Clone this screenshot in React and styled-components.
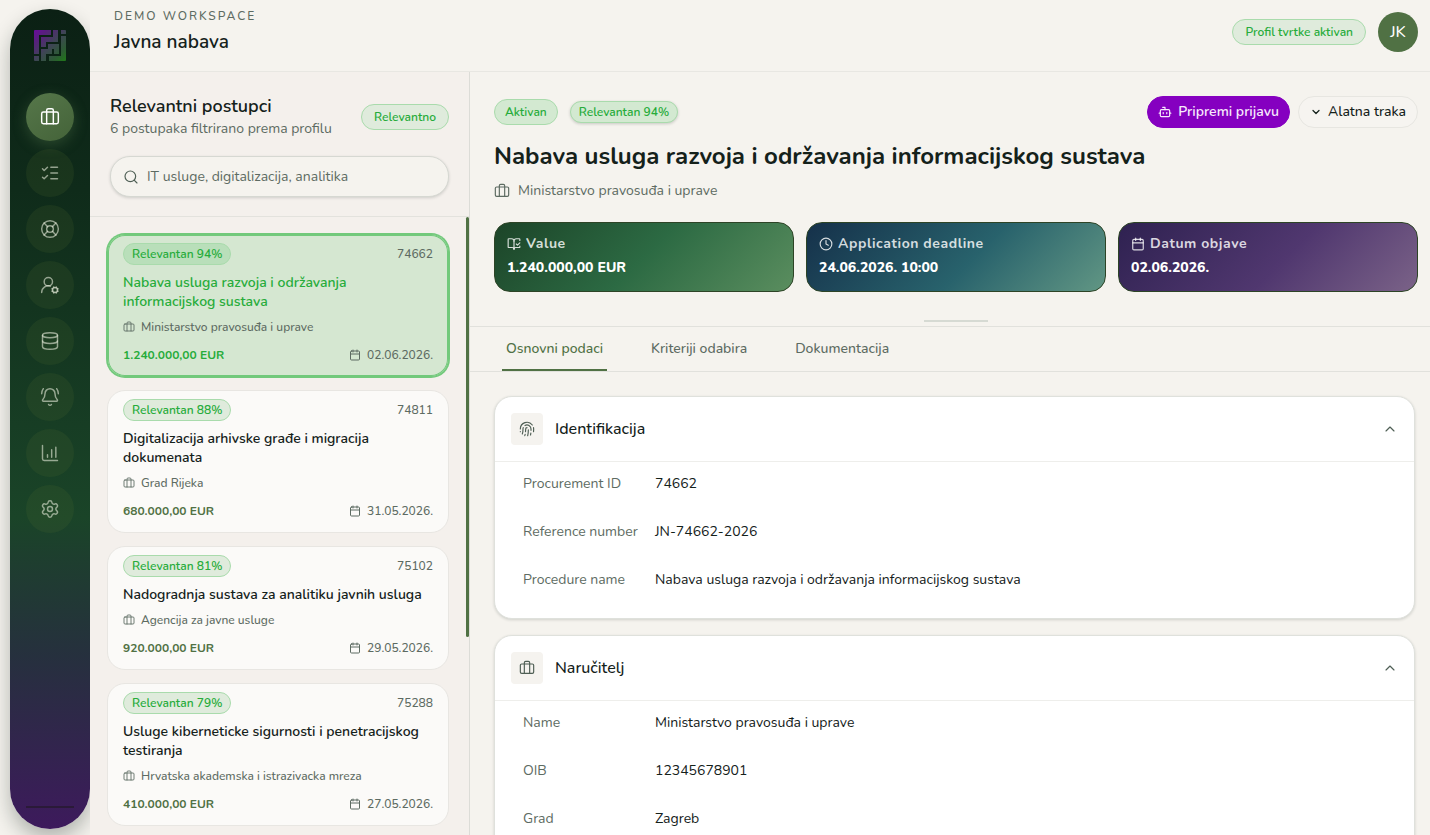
import React from "react";
import styled, { createGlobalStyle, css } from "styled-components";
import {
  BellRing,
  BookOpenCheck,
  Bot,
  Briefcase,
  Calendar,
  ChevronDown,
  ChevronUp,
  Clock4,
  Database,
  Fingerprint,
  LifeBuoy,
  ListChecks,
  Search,
  Settings,
  UserRoundCog,
} from "lucide-react";

const family = '"Nunito", "Open Sans", "Noto Sans", sans-serif';

const GlobalStyle = createGlobalStyle`
  *, *::before, *::after { box-sizing: border-box; }
  body {
    margin: 0;
    background: #f5f3ee;
    color: #14211a;
    font: 400 14px/20px ${family};
  }
  h1, h2, h3, p, ul, dl, dd { margin: 0; padding: 0; }
  button, input { font: inherit; color: inherit; margin: 0; }
  button { cursor: pointer; }
  svg { flex: none; }
`;

const Shell = styled.div`
  display: grid;
  grid-template-columns: 90px minmax(0, 1fr);
  height: 100vh;
  overflow: hidden;
`;

const Rail = styled.aside`
  display: flex;
  overflow: hidden;
  padding: 9px 0 6px 10px;
`;

const RailBody = styled.nav`
  flex: 1;
  display: flex;
  flex-direction: column;
  align-items: center;
  gap: 8px;
  padding: 21px 0;
  border-radius: 40px;
  background: linear-gradient(180deg, #0b2014 0%, #0f2b1a 22%, #1a4428 62%, #26303e 79%, #3d1a5c 100%);
  box-shadow: 0 10px 20px rgba(20, 33, 26, 0.3);
`;

const LogoBox = styled.div`
  height: 32px;
  margin-bottom: 23px;
`;

const NavButton = styled.button`
  display: grid;
  place-items: center;
  width: 48px;
  height: 48px;
  padding: 0;
  border: 0;
  border-radius: 50%;
  color: rgba(232, 236, 220, 0.6);
  background: rgba(90, 110, 50, 0.16);
  ${(p) =>
    p.$active &&
    css`
      color: #ffffff;
      background: linear-gradient(145deg, #56774a, #446339);
      box-shadow: 0 4px 14px rgba(86, 119, 74, 0.4);
    `}
`;

const RailDivider = styled.div`
  width: 48px;
  height: 2px;
  margin-top: auto;
  background: #2a1a38;
`;

const Main = styled.div`
  display: flex;
  flex-direction: column;
  min-height: 0;
`;

const TopBar = styled.header`
  display: flex;
  align-items: center;
  justify-content: space-between;
  height: 72px;
  padding: 0 12px 8px 24px;
  border-bottom: 1px solid #e8e7e2;
`;

const Overline = styled.p`
  font-size: 12px;
  font-weight: 500;
  line-height: 20px;
  letter-spacing: 2px;
  color: #5d6b62;
`;

const PageTitle = styled.h1`
  font-size: 19px;
  font-weight: 600;
  line-height: 32px;
`;

const Cluster = styled.div`
  display: flex;
  align-items: center;
  gap: ${(p) => p.$gap || 12}px;
`;

const pillTones = { light: "#dfebdc", mid: "#d3e9d1", deep: "#b9dfba" };

const Pill = styled.span`
  display: inline-flex;
  align-items: center;
  height: ${(p) => (p.$small ? 22 : 26)}px;
  padding: 0 ${(p) => (p.$small ? 8 : p.$wide ? 12 : 10)}px;
  border: 1px solid #a9dbac;
  border-radius: 13px;
  background: ${(p) => pillTones[p.$tone || "light"]};
  color: #27ac3b;
  font-size: 12px;
  font-weight: 600;
  line-height: 16px;
  white-space: nowrap;
  ${(p) => p.$raised && "box-shadow: 0 1px 3px rgba(20, 33, 26, 0.2);"}
`;

const Avatar = styled.button`
  width: 40px;
  height: 40px;
  padding: 0;
  border: 0;
  border-radius: 50%;
  background: #507144;
  color: #ffffff;
  font-size: 16px;
  font-weight: 500;
`;

const Workspace = styled.div`
  flex: 1;
  display: grid;
  grid-template-columns: 380px minmax(0, 1fr);
  min-height: 0;
`;

const ListPane = styled.section`
  display: flex;
  flex-direction: column;
  min-height: 0;
  border-right: 1px solid #dcdcd7;
  background: #f4f0ec;
`;

const ListHead = styled.div`
  padding: 22px 20px 19px;
  border-bottom: 1px solid #e3e2dd;
`;

const ListHeadRow = styled.div`
  display: flex;
  align-items: center;
  justify-content: space-between;
`;

const ListTitle = styled.h2`
  font-size: 18px;
  font-weight: 600;
  line-height: 24px;
`;

const Subtitle = styled.p`
  line-height: 22px;
  color: #5d6b62;
`;

const SearchBox = styled.label`
  display: flex;
  align-items: center;
  gap: 8px;
  height: 41px;
  margin-top: 16px;
  padding: 0 12px;
  border: 1px solid #d6d8d2;
  border-radius: 20px;
  background: #f5f3ee;
  color: #4f5f55;
  box-shadow: 0 1px 3px rgba(20, 33, 26, 0.16);
`;

const SearchInput = styled.input`
  flex: 1;
  min-width: 0;
  padding: 0;
  border: 0;
  outline: 0;
  background: none;
  &::placeholder { color: #5d6b62; opacity: 1; }
`;

const ListScroll = styled.div`
  position: relative;
  flex: 1;
  min-height: 0;
  overflow: hidden;
`;

const ScrollThumb = styled.div`
  position: absolute;
  top: 0;
  right: 0;
  width: 3px;
  height: 68%;
  border-radius: 2px;
  background: #507144;
`;

const CardList = styled.ul`
  display: grid;
  gap: 13px;
  padding: 17px 20px 17px 17px;
  list-style: none;
`;

const TenderCard = styled.button`
  display: block;
  width: 100%;
  padding: 8px 15px 13px;
  border: 1px solid #e8e6e2;
  border-radius: 18px;
  background: #fbfaf8;
  color: #14211a;
  text-align: left;
  ${(p) =>
    p.$selected &&
    css`
      border-color: #72c97b;
      background: #d5e7d1;
      color: #27ac3b;
      box-shadow: inset 0 0 0 1px #72c97b, 0 0 0 1px #72c97b;
    `}
`;

const CardRow = styled.span`
  display: flex;
  align-items: center;
  justify-content: space-between;
`;

const CardTitle = styled.span`
  display: block;
  margin: 8px 0;
  font-weight: 600;
  line-height: 19px;
`;

const Meta = styled.span`
  display: flex;
  align-items: center;
  gap: 6px;
  color: #5d6b62;
  font-size: 12px;
  font-weight: 500;
  line-height: 16px;
`;

const Organisation = styled(Meta)`
  margin-bottom: 12px;
`;

const Amount = styled.span`
  color: ${(p) => (p.$selected ? "#27ac3b" : "#507144")};
  font-size: 12px;
  font-weight: 700;
  line-height: 16px;
`;

const DetailPane = styled.section`
  display: flex;
  flex-direction: column;
  min-height: 0;
`;

const DetailHead = styled.div`
  padding: 24px 12px 4px 24px;
  border-bottom: 1px solid #e1e1dc;
`;

const DetailTop = styled.div`
  display: flex;
  align-items: center;
  justify-content: space-between;
`;

const Action = styled.button`
  display: inline-flex;
  align-items: center;
  gap: 6px;
  height: 32px;
  padding: 0 ${(p) => (p.$primary ? 10 : 11)}px;
  border: 1px solid ${(p) => (p.$primary ? "#8500c0" : "#e7e6e1")};
  border-radius: 16px;
  background: ${(p) => (p.$primary ? "#8500c0" : "#f6f4f0")};
  color: ${(p) => (p.$primary ? "#f7eafc" : "#14211a")};
  font-weight: ${(p) => (p.$primary ? 600 : 500)};
`;

const DetailTitle = styled.h2`
  margin-top: 12px;
  font-size: 24px;
  font-weight: 700;
  line-height: 32px;
`;

const Buyer = styled.p`
  display: flex;
  align-items: center;
  gap: 8px;
  margin-top: 9px;
  color: #5d6b62;
`;

const Metrics = styled.div`
  display: grid;
  grid-template-columns: repeat(3, minmax(0, 1fr));
  gap: 12px;
  margin-top: 21px;
`;

const metricFill = {
  green: "linear-gradient(135deg, #1c4428 0%, #2c6a43 50%, #5b8e5f 100%)",
  blue: "linear-gradient(135deg, #15304a 0%, #28626c 55%, #629784 100%)",
  purple: "linear-gradient(135deg, #2e2150 0%, #50376f 55%, #7b6388 100%)",
};

const Metric = styled.div`
  padding: 11px 12px 13px;
  border: 1px solid #2d4426;
  border-radius: 16px;
  background: ${(p) => metricFill[p.$tone]};
  background-origin: border-box;
`;

const MetricLabel = styled.p`
  display: flex;
  align-items: center;
  gap: 5px;
  margin-bottom: 4px;
  color: rgba(255, 255, 255, 0.82);
  font-weight: 700;
  letter-spacing: 0.04em;
`;

const MetricValue = styled.p`
  color: #ffffff;
  font-weight: 800;
`;

const ResizeHandle = styled.div`
  width: 64px;
  height: 2px;
  margin: 28px auto 0;
  background: #d6dad3;
`;

const Tabs = styled.div`
  display: flex;
  gap: 40px;
  padding: 0 32px;
  border-bottom: 1px solid #e1e1dc;
`;

const Tab = styled.button`
  height: 44px;
  padding: 0 4px;
  border: 0;
  background: none;
  color: ${(p) => (p.$active ? "#507144" : "#5d6b62")};
  font-weight: 500;
  box-shadow: ${(p) => (p.$active ? "inset 0 -2px #507144" : "none")};
`;

const Sections = styled.div`
  flex: 1;
  min-height: 0;
  overflow: hidden;
  padding: 24px 15px 0 24px;
`;

const Panel = styled.section`
  margin-bottom: 16px;
  border: 1px solid #dfe1dc;
  border-radius: 18px;
  background: #ffffff;
  box-shadow: 0 1px 3px rgba(20, 33, 26, 0.16);
`;

const PanelHead = styled.button`
  display: flex;
  align-items: center;
  gap: 12px;
  width: 100%;
  height: 65px;
  padding: 0 16px;
  border: 0;
  border-bottom: 1px solid #eeeeeb;
  background: none;
  color: #4f5f55;
  text-align: left;
`;

const PanelIcon = styled.span`
  display: grid;
  place-items: center;
  width: 32px;
  height: 32px;
  border-radius: 4px;
  background: #f5f3ef;
`;

const PanelTitle = styled.span`
  flex: 1;
  color: #14211a;
  font-size: 16px;
  font-weight: 500;
  line-height: 24px;
`;

const Fields = styled.dl`
  display: grid;
  grid-template-columns: 116px minmax(0, 1fr);
  gap: 30px 16px;
  padding: 13px 28px 29px;
  line-height: 18px;
`;

const FieldName = styled.dt`
  color: #5d6b62;
  white-space: nowrap;
`;

function Logo() {
  return (
    <svg width="32" height="32" viewBox="0 0 32 32" aria-hidden="true">
      <defs>
        <linearGradient id="logo-fill" x1="0" y1="0" x2="1" y2="1">
          <stop offset="0" stopColor="#6a0a9c" />
          <stop offset="0.22" stopColor="#57207c" />
          <stop offset="0.5" stopColor="#3f4456" />
          <stop offset="0.78" stopColor="#2c5a34" />
          <stop offset="1" stopColor="#1f7a18" />
        </linearGradient>
      </defs>
      <path
        fill="url(#logo-fill)"
        d="M1 0H17V5H5V24H0V1Q0 0 1 0Z M19 0H24V12H12V17H7V7H19Z M27 0H31Q32 0 32 1V4H27Z M27 6H32V30Q32 31 31 31H15V26H27Z M0 26H5V31H1Q0 31 0 30Z M14 14H25V24H20V19H14Z M7 19H18V24H12V31H7Z"
      />
    </svg>
  );
}

function BarsIcon({ size, strokeWidth }) {
  return (
    <svg width={size} height={size} viewBox="0 0 24 24" fill="none" stroke="currentColor" strokeWidth={strokeWidth} strokeLinecap="round" strokeLinejoin="round" aria-hidden="true">
      <path d="M3 3v16a2 2 0 0 0 2 2h16 M9 17v-3 M14 17V8 M19 17V5" />
    </svg>
  );
}

const navItems = [
  ["Postupci", Briefcase],
  ["Zadaci", ListChecks],
  ["Podrška", LifeBuoy],
  ["Profil", UserRoundCog],
  ["Podaci", Database],
  ["Obavijesti", BellRing],
  ["Izvještaji", BarsIcon],
  ["Postavke", Settings],
];

const tenders = [
  { id: "74662", score: 94, title: "Nabava usluga razvoja i održavanja informacijskog sustava", org: "Ministarstvo pravosuđa i uprave", amount: "1.240.000,00 EUR", date: "02.06.2026." },
  { id: "74811", score: 88, title: "Digitalizacija arhivske građe i migracija dokumenata", org: "Grad Rijeka", amount: "680.000,00 EUR", date: "31.05.2026." },
  { id: "75102", score: 81, title: "Nadogradnja sustava za analitiku javnih usluga", org: "Agencija za javne usluge", amount: "920.000,00 EUR", date: "29.05.2026." },
  { id: "75288", score: 79, title: "Usluge kiberneticke sigurnosti i penetracijskog testiranja", org: "Hrvatska akademska i istrazivacka mreza", amount: "410.000,00 EUR", date: "27.05.2026." },
];

const metrics = [
  { tone: "green", label: "Value", value: "1.240.000,00 EUR", Icon: BookOpenCheck },
  { tone: "blue", label: "Application deadline", value: "24.06.2026. 10:00", Icon: Clock4 },
  { tone: "purple", label: "Datum objave", value: "02.06.2026.", Icon: Calendar },
];

const panels = [
  {
    title: "Identifikacija",
    Icon: Fingerprint,
    fields: [
      ["Procurement ID", "74662"],
      ["Reference number", "JN-74662-2026"],
      ["Procedure name", "Nabava usluga razvoja i održavanja informacijskog sustava"],
    ],
  },
  {
    title: "Naručitelj",
    Icon: Briefcase,
    fields: [
      ["Name", "Ministarstvo pravosuđa i uprave"],
      ["OIB", "12345678901"],
      ["Grad", "Zagreb"],
    ],
  },
];

export default function App() {
  const [selected, setSelected] = React.useState("74662");
  const [tab, setTab] = React.useState("Osnovni podaci");

  return (
    <>
      <GlobalStyle />
      <Shell>
        <Rail>
          <RailBody>
            <LogoBox>
              <Logo />
            </LogoBox>
            {navItems.map(([label, Icon], index) => (
              <NavButton key={label} type="button" aria-label={label} $active={index === 0}>
                <Icon size={20} strokeWidth={1.75} />
              </NavButton>
            ))}
            <RailDivider />
          </RailBody>
        </Rail>

        <Main>
          <TopBar>
            <div>
              <Overline>DEMO WORKSPACE</Overline>
              <PageTitle>Javna nabava</PageTitle>
            </div>
            <Cluster>
              <Pill $wide>Profil tvrtke aktivan</Pill>
              <Avatar type="button">JK</Avatar>
            </Cluster>
          </TopBar>

          <Workspace>
            <ListPane>
              <ListHead>
                <ListHeadRow>
                  <div>
                    <ListTitle>Relevantni postupci</ListTitle>
                    <Subtitle>6 postupaka filtrirano prema profilu</Subtitle>
                  </div>
                  <Pill $wide>Relevantno</Pill>
                </ListHeadRow>
                <SearchBox>
                  <Search size={16} strokeWidth={1.75} aria-hidden="true" />
                  <SearchInput type="search" aria-label="Pretraga" placeholder="IT usluge, digitalizacija, analitika" />
                </SearchBox>
              </ListHead>
              <ListScroll>
                <CardList>
                  {tenders.map((tender) => {
                    const active = tender.id === selected;
                    return (
                      <li key={tender.id}>
                        <TenderCard type="button" $selected={active} onClick={() => setSelected(tender.id)}>
                          <CardRow>
                            <Pill $small $tone={active ? "deep" : "light"}>
                              Relevantan {tender.score}%
                            </Pill>
                            <Meta>{tender.id}</Meta>
                          </CardRow>
                          <CardTitle>{tender.title}</CardTitle>
                          <Organisation>
                            <Briefcase size={12} strokeWidth={1.75} aria-hidden="true" />
                            {tender.org}
                          </Organisation>
                          <CardRow>
                            <Amount $selected={active}>{tender.amount}</Amount>
                            <Meta>
                              <Calendar size={12} strokeWidth={2} aria-hidden="true" />
                              {tender.date}
                            </Meta>
                          </CardRow>
                        </TenderCard>
                      </li>
                    );
                  })}
                </CardList>
                <ScrollThumb />
              </ListScroll>
            </ListPane>

            <DetailPane>
              <DetailHead>
                <DetailTop>
                  <Cluster>
                    <Pill $tone="mid">Aktivan</Pill>
                    <Pill $small $raised $tone="mid">
                      Relevantan 94%
                    </Pill>
                  </Cluster>
                  <Cluster $gap={8}>
                    <Action type="button" $primary>
                      <Bot size={14} strokeWidth={2} aria-hidden="true" />
                      Pripremi prijavu
                    </Action>
                    <Action type="button">
                      <ChevronDown size={12} strokeWidth={2.5} aria-hidden="true" />
                      Alatna traka
                    </Action>
                  </Cluster>
                </DetailTop>
                <DetailTitle>Nabava usluga razvoja i održavanja informacijskog sustava</DetailTitle>
                <Buyer>
                  <Briefcase size={16} strokeWidth={1.75} aria-hidden="true" />
                  Ministarstvo pravosuđa i uprave
                </Buyer>
                <Metrics>
                  {metrics.map(({ tone, label, value, Icon }) => (
                    <Metric key={label} $tone={tone}>
                      <MetricLabel>
                        <Icon size={14} strokeWidth={2} aria-hidden="true" />
                        {label}
                      </MetricLabel>
                      <MetricValue>{value}</MetricValue>
                    </Metric>
                  ))}
                </Metrics>
                <ResizeHandle />
              </DetailHead>
              <Tabs role="tablist">
                {["Osnovni podaci", "Kriteriji odabira", "Dokumentacija"].map((name) => (
                  <Tab key={name} type="button" role="tab" aria-selected={tab === name} $active={tab === name} onClick={() => setTab(name)}>
                    {name}
                  </Tab>
                ))}
              </Tabs>
              <Sections>
                {panels.map(({ title, Icon, fields }) => (
                  <Panel key={title}>
                    <PanelHead type="button" aria-expanded="true">
                      <PanelIcon>
                        <Icon size={16} strokeWidth={1.75} aria-hidden="true" />
                      </PanelIcon>
                      <PanelTitle>{title}</PanelTitle>
                      <ChevronUp size={16} strokeWidth={1.75} aria-hidden="true" />
                    </PanelHead>
                    <Fields>
                      {fields.map(([name, value]) => (
                        <React.Fragment key={name}>
                          <FieldName>{name}</FieldName>
                          <dd>{value}</dd>
                        </React.Fragment>
                      ))}
                    </Fields>
                  </Panel>
                ))}
              </Sections>
            </DetailPane>
          </Workspace>
        </Main>
      </Shell>
    </>
  );
}
